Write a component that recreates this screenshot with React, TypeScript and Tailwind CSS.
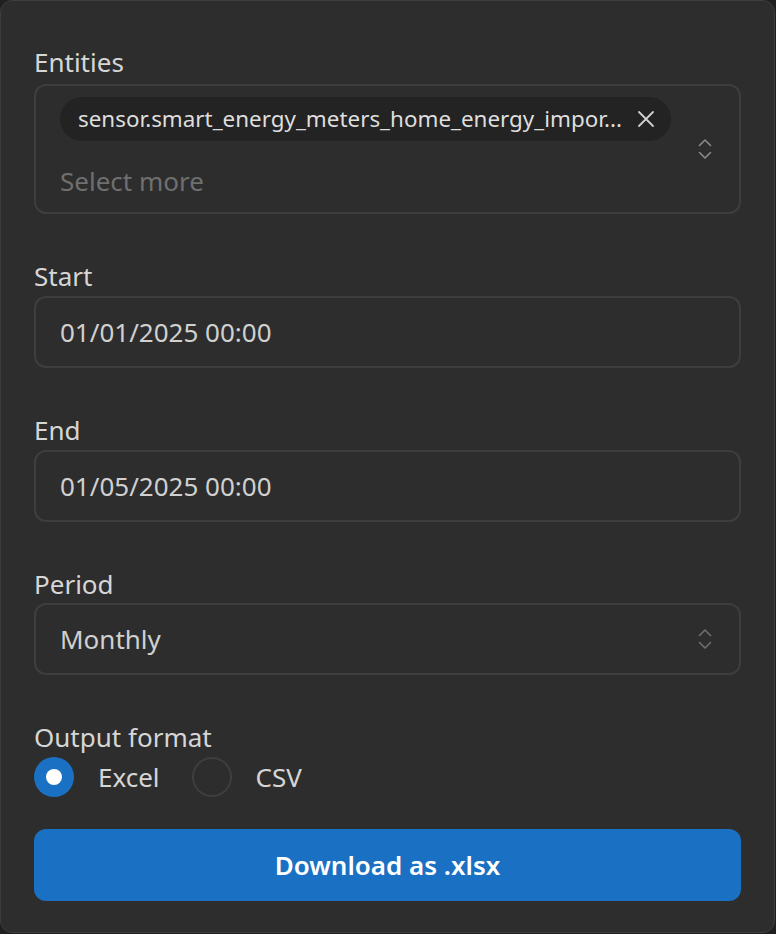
import React from "react";

const ChevronUpDown = () => (
  <svg width="14" height="22" viewBox="0 0 14 22" fill="none" stroke="currentColor" strokeWidth="1.6" strokeLinecap="round" strokeLinejoin="round">
    <path d="M1.5 7.5 L7 2 L12.5 7.5" />
    <path d="M1.5 14.5 L7 20 L12.5 14.5" />
  </svg>
);

export default function App() {
  return (
    <div className="w-[776px] h-[934px] bg-[#1f1f1f]" style={{ fontFamily: '"Noto Sans", "Open Sans", sans-serif' }}>
      <div className="w-[775px] h-[933px] bg-[#2d2d2d] border border-[#3d3d3d] rounded-[12px] px-[33px] pt-[43px] flex flex-col text-[#d6d6d6]">
        <div className="text-[26px] leading-[36px]">Entities</div>
        <div className="mt-[4px] h-[130px] rounded-[12px] border-2 border-[#3e3e3e] flex items-center pl-[24px] pr-[27px]">
          <div className="flex-1 flex flex-col">
            <div className="h-[44px] w-[611px] rounded-full bg-[#232323] flex items-center pl-[18px] pr-[16px]">
              <span className="flex-1 text-[22.4px] text-[#dedede] whitespace-nowrap overflow-hidden">sensor.smart_energy_meters_home_energy_impor...</span>
              <svg width="18" height="18" viewBox="0 0 18 18" stroke="#d0d0d0" strokeWidth="1.8" strokeLinecap="round">
                <path d="M2 2 L16 16 M16 2 L2 16" />
              </svg>
            </div>
            <div className="mt-[20px] text-[26px] leading-[40px] text-[#6f6f6f]">Select more</div>
          </div>
          <div className="text-[#8a8a8a]"><ChevronUpDown /></div>
        </div>

        <div className="mt-[44px] text-[26px] leading-[36px]">Start</div>
        <div className="mt-[2px] h-[72px] rounded-[12px] border-2 border-[#3e3e3e] flex items-center pl-[24px] text-[26px] text-[#d0d0d0]">01/01/2025 00:00</div>

        <div className="mt-[44px] text-[26px] leading-[36px]">End</div>
        <div className="mt-[2px] h-[72px] rounded-[12px] border-2 border-[#3e3e3e] flex items-center pl-[24px] text-[26px] text-[#d0d0d0]">01/05/2025 00:00</div>

        <div className="mt-[44px] text-[26px] leading-[36px]">Period</div>
        <div className="mt-[1px] h-[72px] rounded-[12px] border-2 border-[#3e3e3e] flex items-center pl-[24px] pr-[27px] text-[26px] text-[#d0d0d0]">
          <span className="flex-1">Monthly</span>
          <span className="text-[#6e6e6e]"><ChevronUpDown /></span>
        </div>

        <div className="mt-[44px] text-[26px] leading-[36px]">Output format</div>
        <div className="mt-[2px] flex items-center h-[40px]">
          <div className="w-[40px] h-[40px] rounded-full bg-[#1a70c2] flex items-center justify-center">
            <div className="w-[16px] h-[16px] rounded-full bg-white" />
          </div>
          <span className="ml-[24px] text-[26px]">Excel</span>
          <div className="ml-[32px] w-[40px] h-[40px] rounded-full border-2 border-[#3e3e3e]" />
          <span className="ml-[24px] text-[26px]">CSV</span>
        </div>

        <button className="mt-[32px] h-[72px] rounded-[12px] bg-[#1a70c2] text-white font-semibold text-[26px]">Download as .xlsx</button>
      </div>
    </div>
  );
}
